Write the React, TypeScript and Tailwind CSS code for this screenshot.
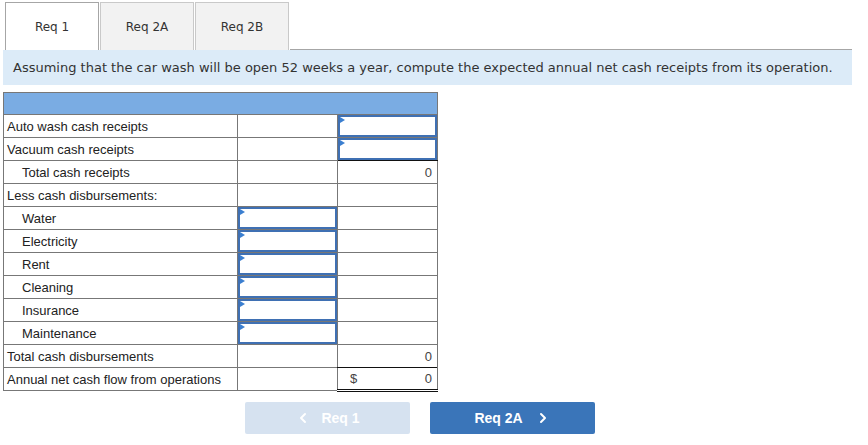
import { ChevronLeft, ChevronRight } from 'lucide-react';

type Row = {
  label: string;
  indent?: boolean;
  mid?: 'input' | 'empty';
  right?: 'input' | 'zero' | 'dollar' | 'empty';
  midTopDark?: boolean;
  rightBottomDark?: boolean;
};

const rows: Row[] = [
  { label: 'Auto wash cash receipts', right: 'input' },
  { label: 'Vacuum cash receipts', right: 'input', rightBottomDark: true },
  { label: 'Total cash receipts', indent: true, right: 'zero' },
  { label: 'Less cash disbursements:' },
  { label: 'Water', indent: true, mid: 'input' },
  { label: 'Electricity', indent: true, mid: 'input' },
  { label: 'Rent', indent: true, mid: 'input' },
  { label: 'Cleaning', indent: true, mid: 'input' },
  { label: 'Insurance', indent: true, mid: 'input' },
  { label: 'Maintenance', indent: true, mid: 'input' },
  { label: 'Total cash disbursements', midTopDark: true, right: 'zero' },
  { label: 'Annual net cash flow from operations', right: 'dollar' },
];

const InputBox = () => (
  <div className="relative h-full w-full border-2 border-[#3f70b3] bg-white">
    <span className="absolute left-0 top-0 h-0 w-0 border-y-[3px] border-l-[5px] border-y-transparent border-l-[#3b7fd0]" />
  </div>
);

const Tab = ({ label, active }: { label: string; active?: boolean }) => (
  <div
    className={`flex h-[48px] w-[94px] items-center justify-center border border-b-0 text-[12px] text-[#333] ${
      active ? 'border-[#a6a6a6] bg-white' : 'border-[#c9c9c9] bg-[#f2f2f2]'
    }`}
  >
    {label}
  </div>
);

export default function App() {
  return (
    <div className="h-[445px] w-[868px] bg-white" style={{ fontFamily: '"DejaVu Sans", Verdana, sans-serif' }}>
      <div className="w-[852px] pl-[3px] pt-[2px]">
        <div className="flex items-end gap-[1px] pl-[2px]">
          <Tab label="Req 1" active />
          <Tab label="Req 2A" />
          <Tab label="Req 2B" />
          <div className="flex-1 border-b border-[#a6a6a6]" />
        </div>
        <div className="flex h-[35px] items-center bg-[#dcebf8] pl-[10px] text-[13px] text-[#333]">
          Assuming that the car wash will be open 52 weeks a year, compute the expected annual net cash receipts from its operation.
        </div>
      </div>

      <div className="pl-[3px] pt-[7px]" style={{ fontFamily: '"Liberation Sans", Arial, sans-serif' }}>
        <table className="border-collapse text-[13px] text-[#222]">
          <thead>
            <tr>
              <th colSpan={3} className="h-[22px] border border-[#777] bg-[#7aace3] p-0" />
            </tr>
          </thead>
          <tbody>
            {rows.map((r) => (
              <tr key={r.label} className="h-[23px]">
                <td className={`w-[234px] border border-[#777] p-0 leading-none ${r.indent ? 'pl-[18px]' : 'pl-[3px]'}`}>
                  {r.label}
                </td>
                <td
                  className={`h-[23px] w-[100px] border border-[#777] p-0 ${r.midTopDark ? 'border-t-[#111]' : ''}`}
                >
                  {r.mid === 'input' && <InputBox />}
                </td>
                <td
                  className={`h-[23px] w-[100px] border border-[#777] p-0 leading-none ${
                    r.rightBottomDark ? 'border-b-[#111]' : ''
                  } ${r.right === 'dollar' ? 'border-t-[#111] border-b-[3px] border-b-[#111] border-double' : ''}`}
                >
                  {r.right === 'input' && <InputBox />}
                  {r.right === 'zero' && <div className="pr-[5px] text-right text-[#444]">0</div>}
                  {r.right === 'dollar' && (
                    <div className="flex justify-between pl-[12px] pr-[5px] text-[#444]">
                      <span>$</span>
                      <span>0</span>
                    </div>
                  )}
                </td>
              </tr>
            ))}
          </tbody>
        </table>
      </div>

      <div className="flex gap-[20px] pl-[245px] pt-[10px]" style={{ fontFamily: '"Liberation Sans", Arial, sans-serif' }}>
        <button className="flex h-[32px] w-[165px] items-center justify-center gap-[10px] rounded-[2px] bg-[#d6e2f0] text-[14px] font-bold text-white">
          <ChevronLeft size={16} strokeWidth={3} />
          <span>Req 1</span>
        </button>
        <button className="flex h-[32px] w-[165px] items-center justify-center gap-[12px] rounded-[2px] bg-[#3a75b9] text-[14px] font-bold text-white">
          <span>Req 2A</span>
          <ChevronRight size={16} strokeWidth={3} />
        </button>
      </div>
    </div>
  );
}
